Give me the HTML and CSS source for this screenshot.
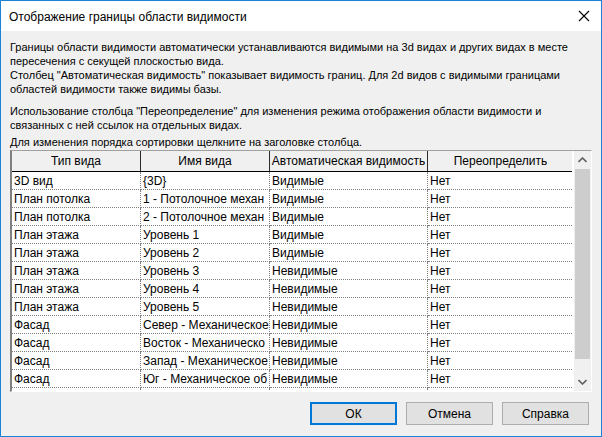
FILE: index.html
```html
<!DOCTYPE html>
<html lang="ru">
<head>
    <meta charset="UTF-8">
    <title>Отображение границы области видимости</title>
    <link rel="stylesheet" href="styles.css">
</head>
<body>
    <div class="dialog">
        <div class="titlebar">
            <span class="caption">Отображение границы области видимости</span>
            <svg class="close" width="12" height="12" viewBox="0 0 12 12">
                <path d="M1 1 L11 11 M11 1 L1 11" stroke="#000" stroke-width="1.1" fill="none"/>
            </svg>
        </div>
        <div class="content">
            <p class="info">Границы области видимости автоматически устанавливаются видимыми на 3d видах и других видах в месте пересечения с секущей плоскостью вида.<br>Столбец "Автоматическая видимость" показывает видимость границ. Для 2d видов с видимыми границами областей видимости также видимы базы.</p>
            <p class="info gap">Использование столбца "Переопределение" для изменения режима отображения области видимости и связанных с ней ссылок на отдельных видах.</p>
            <p class="info hint">Для изменения порядка сортировки щелкните на заголовке столбца.</p>

            <div class="grid">
                <div class="grid-body">
                    <table class="views">
                        <thead>
                            <tr>
                                <th class="c1">Тип вида</th>
                                <th class="c2">Имя вида</th>
                                <th class="c3">Автоматическая видимость</th>
                                <th class="c4">Переопределить</th>
                            </tr>
                        </thead>
                        <tbody>
                            <tr><td>3D вид</td><td>{3D}</td><td>Видимые</td><td>Нет</td></tr>
                            <tr><td>План потолка</td><td>1 - Потолочное механ</td><td>Видимые</td><td>Нет</td></tr>
                            <tr><td>План потолка</td><td>2 - Потолочное механ</td><td>Видимые</td><td>Нет</td></tr>
                            <tr><td>План этажа</td><td>Уровень 1</td><td>Видимые</td><td>Нет</td></tr>
                            <tr><td>План этажа</td><td>Уровень 2</td><td>Видимые</td><td>Нет</td></tr>
                            <tr><td>План этажа</td><td>Уровень 3</td><td>Невидимые</td><td>Нет</td></tr>
                            <tr><td>План этажа</td><td>Уровень 4</td><td>Невидимые</td><td>Нет</td></tr>
                            <tr><td>План этажа</td><td>Уровень 5</td><td>Невидимые</td><td>Нет</td></tr>
                            <tr><td>Фасад</td><td>Север - Механическое</td><td>Невидимые</td><td>Нет</td></tr>
                            <tr><td>Фасад</td><td>Восток - Механическо</td><td>Невидимые</td><td>Нет</td></tr>
                            <tr><td>Фасад</td><td>Запад - Механическое</td><td>Невидимые</td><td>Нет</td></tr>
                            <tr><td>Фасад</td><td>Юг - Механическое об</td><td>Невидимые</td><td>Нет</td></tr>
                            <tr><td></td><td></td><td></td><td></td></tr>
                        </tbody>
                    </table>
                </div>
                <div class="scrollbar">
                    <svg class="arrow" width="9" height="6" viewBox="0 0 9 6">
                        <path d="M0.5 5 L4.5 1 L8.5 5" stroke="#606060" stroke-width="1.6" fill="none"/>
                    </svg>
                    <div class="track"><div class="thumb"></div></div>
                    <svg class="arrow" width="9" height="6" viewBox="0 0 9 6">
                        <path d="M0.5 1 L4.5 5 L8.5 1" stroke="#606060" stroke-width="1.6" fill="none"/>
                    </svg>
                </div>
            </div>

            <div class="buttons">
                <button class="btn default">ОК</button>
                <button class="btn">Отмена</button>
                <button class="btn">Справка</button>
            </div>
        </div>
    </div>
</body>
</html>
```

FILE: styles.css
```css
html, body{
    margin:0;
    padding:0;
    background:#f0f0f0;
}
.dialog{
    width:602px;
    height:437px;
    box-sizing:border-box;
    border:1px solid #1883d7;
    background:#f0f0f0;
    font-family:"Liberation Sans", Arial, sans-serif;
    font-size:12px;
    color:#000;
    display:flex;
    flex-direction:column;
}
.titlebar{
    height:30px;
    background:#fff;
    display:flex;
    align-items:center;
    justify-content:space-between;
    padding:0 8px 0 8px;
    flex:none;
}
.titlebar .caption{
    font-size:12px;
    padding-top:1px;
}
.titlebar .close{
    margin-right:3px;
}
.content{
    flex:1;
    padding:9px 9px 0 9px;
    display:flex;
    flex-direction:column;
}
.info{
    margin:0;
    font-size:11px;
    line-height:14px;
}
.info.gap{margin-top:8px;}
.info.hint{margin-top:3px;}

.grid{
    margin-top:1px;
    height:242px;
    box-sizing:border-box;
    border-top:1px solid #a0a0a0;
    border-left:2px solid #808080;
    border-right:1px solid #fff;
    border-bottom:1px solid #fff;
    background:#fff;
    display:flex;
    overflow:hidden;
}
.grid-body{
    width:560px;
    overflow:hidden;
    flex:none;
}
.views{
    border-collapse:collapse;
    table-layout:fixed;
    width:559px;
    font-size:12px;
}
.views th{
    height:20px;
    padding:0;
    font-weight:normal;
    text-align:center;
    background:#f0f0f0;
    border-right:1px solid #2b2b2b;
    border-bottom:1px solid #000;
    white-space:nowrap;
    overflow:hidden;
}
.views .c1{width:128px;}
.views .c2{width:128px;}
.views .c3{width:157px;}
.views .c4{width:145px;}
.views td{
    height:17px;
    padding:0 0 0 2px;
    border-right:1px dotted #808080;
    border-bottom:1px dotted #808080;
    white-space:nowrap;
    overflow:hidden;
    text-overflow:clip;
}
.scrollbar{
    width:17px;
    margin-left:2px;
    background:#f0f0f0;
    display:flex;
    flex-direction:column;
    align-items:center;
}
.scrollbar .arrow{
    margin:6px 0;
    flex:none;
}
.scrollbar .track{
    flex:1;
    width:100%;
}
.scrollbar .thumb{
    margin:0 1px;
    height:190px;
    background:#cdcdcd;
}

.buttons{
    display:flex;
    justify-content:flex-end;
    gap:9px;
    margin-top:10px;
    padding-right:3px;
}
.btn{
    width:87px;
    height:23px;
    box-sizing:border-box;
    font-family:"Liberation Sans", Arial, sans-serif;
    font-size:12px;
    color:#000;
    background:#e1e1e1;
    border:1px solid #adadad;
    padding:0;
}
.btn.default{
    border:2px solid #0078d7;
}
```
